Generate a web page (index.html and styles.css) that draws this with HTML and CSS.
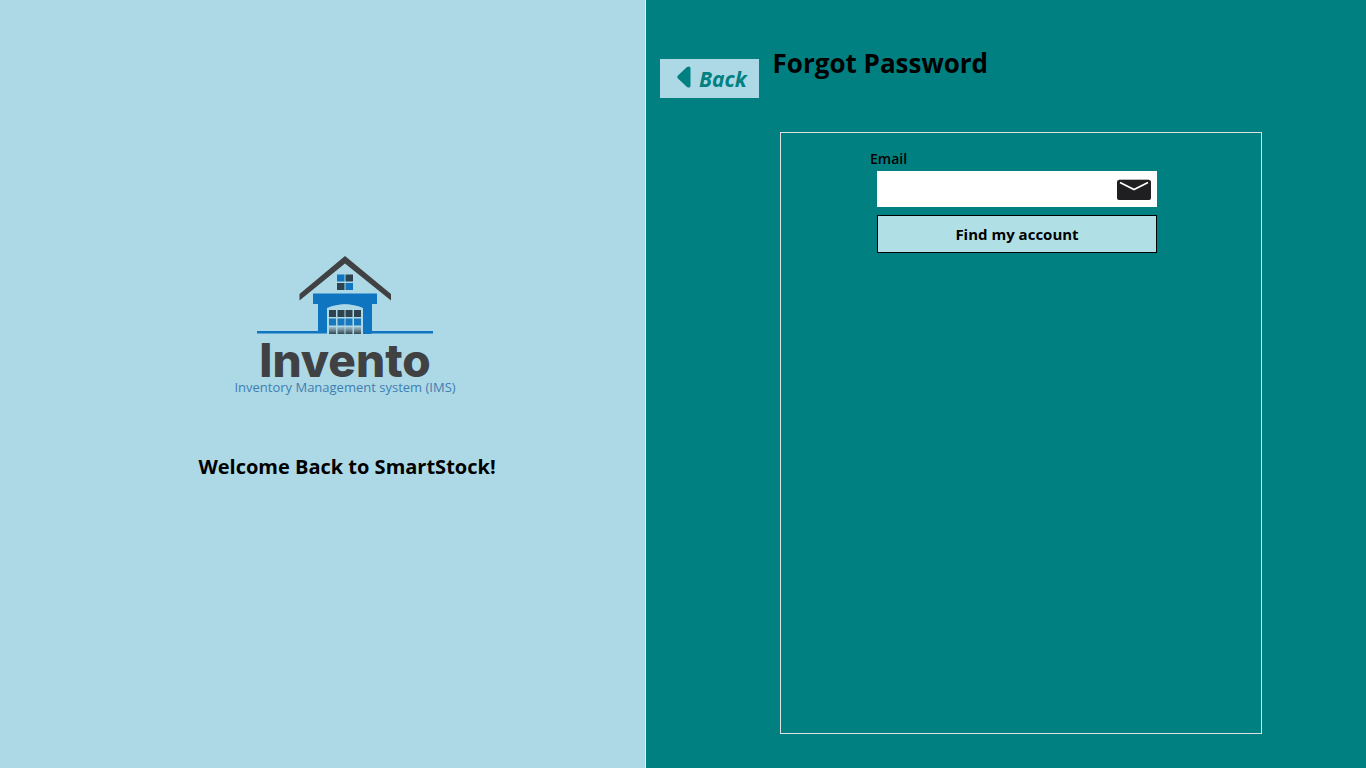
FILE: index.html
```html
<!DOCTYPE html>
<html lang="en">
<head>
<meta charset="utf-8">
<title>Forgot Password</title>
<link rel="stylesheet" href="styles.css">
</head>
<body>
<div class="page">
  <aside class="brand">
    <div class="logo">
      <svg class="logo-house" viewBox="257 255 176 80" aria-hidden="true">
        <path fill="#404142" d="M345 256 391 294V300.500L345 263.500 299.500 300.500V294Z"/>
        <path fill="#0f75c0" d="M337 274.500h7.500v7h-7.500zM345.500 283h7.500v7h-7.500z"/>
        <path fill="#2d4350" d="M345.500 274.500h7.500v7h-7.500zM337 283h7.500v7h-7.500z"/>
        <path fill="#0f75c0" d="M313 293.500H377V304H372V331H433V333.500H371.500V334H363V308Q345 300.500 327 308V333.500H257V331H318V304H313Z"/>
        <path fill="#add8e6" d="M327 334V309Q345 300 363 309V334Z"/>
        <path fill="#2d4350" d="M329 310h7v7h-7zM337.500 310h7v7h-7zM345.500 310h7v7h-7zM354 310h7v7h-7z"/>
        <path fill="#1878be" d="M329 318.500h7v7h-7zM337.500 318.500h7v7h-7zM345.500 318.500h7v7h-7zM354 318.500h7v7h-7z"/>
        <linearGradient id="fade" x1="0" y1="0" x2="0" y2="1"><stop offset="0" stop-color="#9cbecb"/><stop offset="1" stop-color="#344853"/></linearGradient>
        <path fill="url(#fade)" d="M329 327h7v7h-7zM337.500 327h7v7h-7zM345.500 327h7v7h-7zM354 327h7v7h-7z"/>
      </svg>
      <div class="logo-name">Invento</div>
      <div class="logo-tag">Inventory Management system (IMS)</div>
    </div>
    <p class="welcome">Welcome Back to SmartStock!</p>
  </aside>
  <main class="content">
    <header class="top">
      <button class="back" type="button">
        <svg class="back-icon" viewBox="0 0 14 22" aria-hidden="true"><path fill="#008080" d="M1 9.500 10 1Q13 -.5 13.500 2V20Q13 22.500 10 21L1 12.500Q-.5 11 1 9.500Z"/></svg>
        <span>Back</span>
      </button>
      <h1 class="title">Forgot Password</h1>
    </header>
    <form class="card">
      <label class="label" for="email">Email</label>
      <div class="field">
        <input class="input" id="email" type="email">
        <svg class="mail" viewBox="0 0 34 21" aria-hidden="true"><rect y="1" width="34" height="20" rx="2" fill="#1f1f21"/><path d="M2 .5H32" stroke="#b8b8b8"/><path d="M3 3.500 17 10.500 31 3.500" fill="none" stroke="#fff" stroke-width="1.800"/></svg>
      </div>
      <button class="submit" type="submit">Find my account</button>
    </form>
  </main>
</div>
</body>
</html>
```
FILE: styles.css
```css
* { box-sizing: border-box; }
body { margin: 0; font-family: "Open Sans", "Noto Sans", sans-serif; color: #000; }
.page { display: grid; grid-template-columns: 646fr 720fr; min-height: 100vh; }
.brand {
  display: flex;
  flex-direction: column;
  align-items: center;
  justify-content: center;
  padding: 0 0 32px 45px;
  background: #add8e6;
  border-right: 1px solid #e0f0f5;
}
.logo { display: flex; flex-direction: column; align-items: center; }
.logo-house { width: 176px; height: 80px; }
.logo-name { font-family: Inter, sans-serif; font-size: 46px; line-height: 50px; font-weight: 800; color: #404142; }
.logo-tag { margin-top: -5px; font-size: 13px; line-height: 14px; color: #3f7fb0; }
.welcome { margin: 59px 0 0; padding-left: 4px; font-size: 20px; line-height: 28px; font-weight: 700; }
.content { display: flex; flex-direction: column; background: #008080; padding: 44px 104px 34px 14px; }
.top { display: flex; align-items: flex-start; gap: 14px; height: 88px; }
.back {
  display: flex;
  align-items: center;
  gap: 8px;
  height: 39px;
  margin-top: 15px;
  padding: 0 12px 0 17px;
  border: 0;
  background: #add8e6;
  color: #008080;
  font: italic 700 21px/28px "Open Sans", sans-serif;
}
.back-icon { width: 14px; height: 22px; margin-bottom: 4px; }
.title { margin: 0; font-size: 26px; line-height: 38px; font-weight: 700; }
.card { flex: 1; margin-left: 120px; padding: 16px 104px 0 96px; border: 1px solid #e0e0e0; }
.label { display: block; margin-left: -7px; font-size: 14px; line-height: 20px; font-weight: 600; }
.field { display: flex; align-items: center; height: 36px; margin-top: 2px; padding-right: 6px; background: #fff; }
.input { flex: 1; min-width: 0; height: 36px; padding: 0 12px; border: 0; outline: 0; background: transparent; font: 16px "Open Sans", sans-serif; }
.mail { width: 34px; height: 21px; }
.submit {
  width: 100%;
  height: 38px;
  margin-top: 8px;
  border: 1px solid #000;
  background: #b0e0e6;
  color: #000;
  font: 700 15px/20px "Open Sans", sans-serif;
}
```
